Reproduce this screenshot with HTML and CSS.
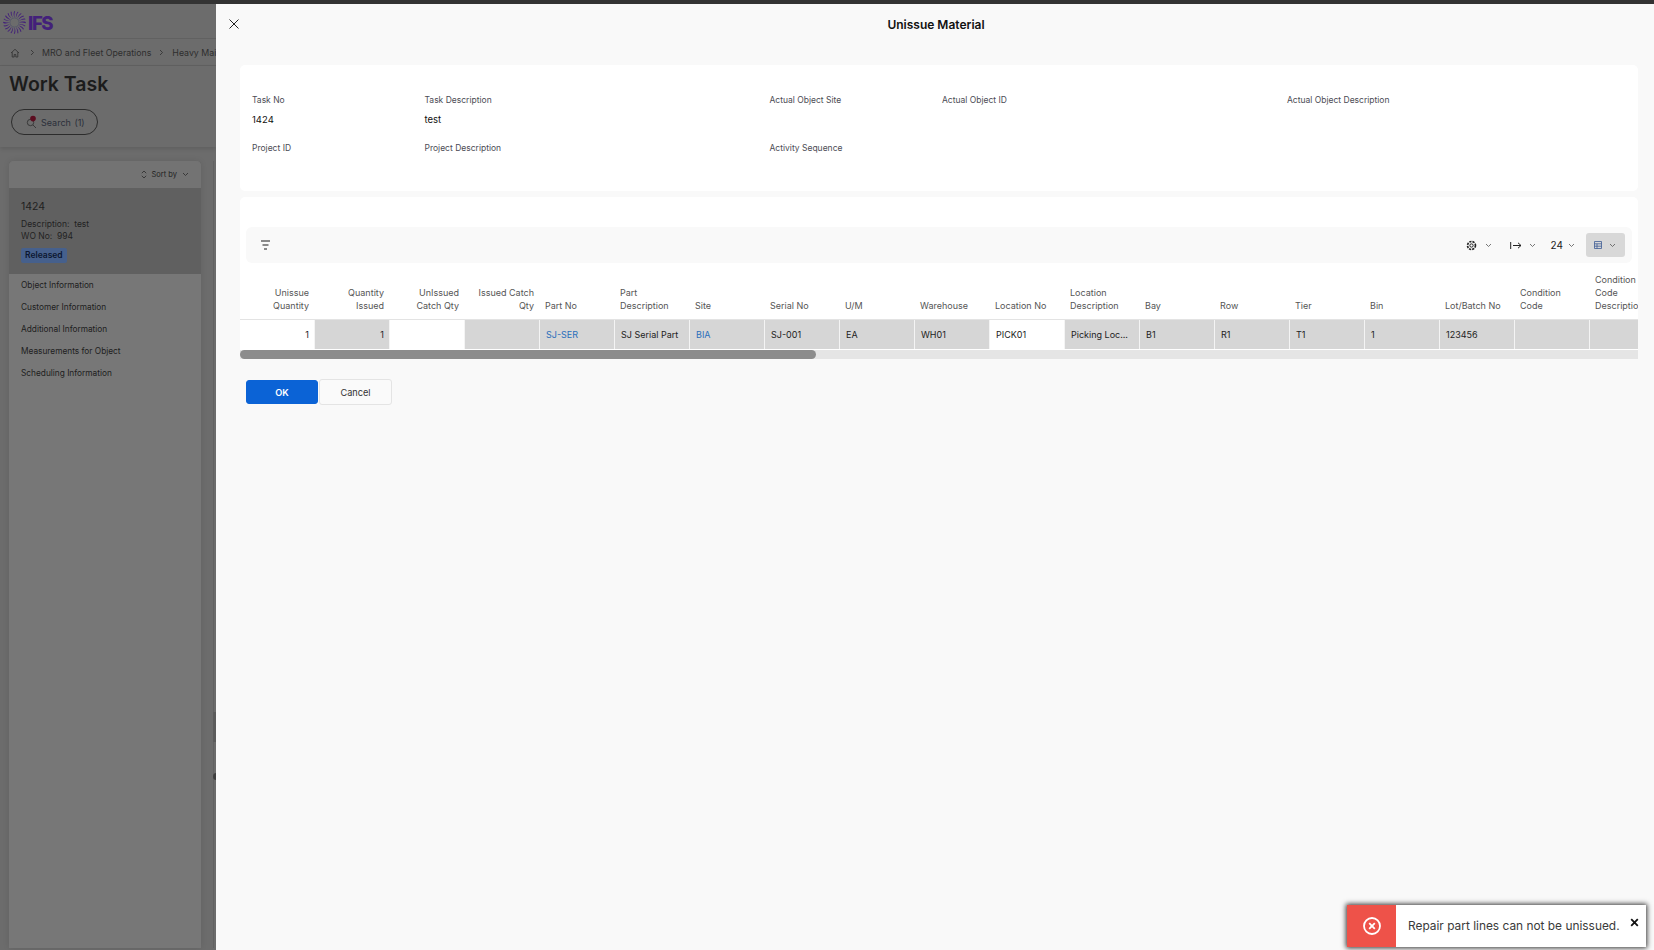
FILE: index.html
```html
<!DOCTYPE html>
<html lang="en">
<head>
<meta charset="utf-8">
<title>Unissue Material</title>
<link rel="stylesheet" href="styles.css">
</head>
<body>
<div class="topline"></div>
<div class="app">
  <aside class="back">
    <div class="logo-row">
      <svg class="logo" width="23" height="23" viewBox="-12 -12 24 24" aria-hidden="true">
        <defs><path id="ray" d="M4.800 0C6.500-.5 9-1.600 11.800-.4L11.700.7C9-.6 6.500.1 4.800 0Z"/></defs>
        <g fill="#43207a">
          <use href="#ray"/><use href="#ray" transform="rotate(18)"/><use href="#ray" transform="rotate(36)"/><use href="#ray" transform="rotate(54)"/><use href="#ray" transform="rotate(72)"/>
          <use href="#ray" transform="rotate(90)"/><use href="#ray" transform="rotate(108)"/><use href="#ray" transform="rotate(126)"/><use href="#ray" transform="rotate(144)"/><use href="#ray" transform="rotate(162)"/>
          <use href="#ray" transform="rotate(180)"/><use href="#ray" transform="rotate(198)"/><use href="#ray" transform="rotate(216)"/><use href="#ray" transform="rotate(234)"/><use href="#ray" transform="rotate(252)"/>
          <use href="#ray" transform="rotate(270)"/><use href="#ray" transform="rotate(288)"/><use href="#ray" transform="rotate(306)"/><use href="#ray" transform="rotate(324)"/><use href="#ray" transform="rotate(342)"/>
        </g>
        <circle r="4.700" fill="none" stroke="#4f5468" stroke-width=".7"/>
      </svg>
      <span class="logo-text">IFS</span>
    </div>
    <nav class="crumbs">
      <svg width="10" height="10" viewBox="0 0 10 10" class="home" aria-hidden="true"><path d="M1 5 5 1.300 9 5M2.200 4.200V9h2V6.500h1.600V9h2V4.200" fill="none" stroke="#2f2f2f" stroke-width=".8"/></svg>
      <svg class="sep" width="5" height="7" viewBox="0 0 5 7" aria-hidden="true"><path d="m1 1 2.500 2.500L1 6" fill="none" stroke="#2f2f2f" stroke-width=".8"/></svg>
      <span>MRO and Fleet Operations</span>
      <svg class="sep" width="5" height="7" viewBox="0 0 5 7" aria-hidden="true"><path d="m1 1 2.500 2.500L1 6" fill="none" stroke="#2f2f2f" stroke-width=".8"/></svg>
      <span class="clip">Heavy Maintenance</span>
    </nav>
    <div class="head">
      <h1>Work Task</h1>
      <div class="search">
        <svg width="12" height="14" viewBox="0 0 12 14" aria-hidden="true"><circle cx="4.500" cy="7.500" r="3.200" fill="none" stroke="#2c2c2c" stroke-width=".8"/><path d="m7 10 3 3" stroke="#2c2c2c" stroke-width=".8"/><circle cx="7" cy="3.600" r="2.800" fill="#5c0d20"/></svg>
        <span>Search (1)</span>
      </div>
    </div>
    <div class="listarea">
      <div class="list">
        <div class="sortbar">
          <svg width="6" height="9" viewBox="0 0 6 9" aria-hidden="true"><path d="M.8 3.200 3 1l2.200 2.200M.8 5.800 3 8l2.200-2.200" fill="none" stroke="#2b2b2b" stroke-width=".8"/></svg>
          <span>Sort by</span>
          <svg class="chev" width="7" height="5" viewBox="0 0 7 5" aria-hidden="true"><path d="m1 1 2.500 2.500L6 1" fill="none" stroke="#2b2b2b" stroke-width=".8"/></svg>
        </div>
        <div class="sel">
          <div class="sel-no">1424</div>
          <div class="sel-line">Description:&nbsp; test</div>
          <div class="sel-line">WO No:&nbsp; 994</div>
          <span class="badge">Released</span>
        </div>
        <ul class="links">
          <li>Object Information</li>
          <li>Customer Information</li>
          <li>Additional Information</li>
          <li>Measurements for Object</li>
          <li>Scheduling Information</li>
        </ul>
      </div>
      <div class="rail"><div class="grip"></div><div class="dot"></div></div>
    </div>
  </aside>

  <main class="drawer">
    <header class="dhead">
      <svg class="close" width="12" height="12" viewBox="0 0 12 12" aria-hidden="true"><path d="m1.500 1.500 9 9m0-9-9 9" stroke="#222" stroke-width="1"/></svg>
      <h2>Unissue Material</h2>
    </header>

    <section class="card fields">
      <div class="f"><label>Task No</label><div class="v">1424</div></div>
      <div class="f s2"><label>Task Description</label><div class="v">test</div></div>
      <div class="f"><label>Actual Object Site</label></div>
      <div class="f s2"><label>Actual Object ID</label></div>
      <div class="f s2"><label>Actual Object Description</label></div>
      <div class="f"><label>Project ID</label></div>
      <div class="f s2"><label>Project Description</label></div>
      <div class="f"><label>Activity Sequence</label></div>
    </section>

    <section class="card tablecard">
      <div class="toolbar">
        <svg width="13" height="12" viewBox="0 0 13 12" aria-hidden="true"><path d="M2 2h9M3.500 6h6M5 10h3" stroke="#1c1c1c" stroke-width="1.200"/></svg>
        <div class="tools">
          <span class="tool gear">
            <svg width="11" height="11" viewBox="0 0 10 10" aria-hidden="true"><circle cx="5" cy="5" r="1.500" fill="none" stroke="#222" stroke-width=".9"/><circle cx="5" cy="5" r="3.600" fill="none" stroke="#222" stroke-width="1.500" stroke-dasharray="2 .9"/></svg>
            <svg class="chev" width="7" height="5" viewBox="0 0 7 5" aria-hidden="true"><path d="m1 1 2.500 2.500L6 1" fill="none" stroke="#555" stroke-width=".8"/></svg>
          </span>
          <span class="tool arrow">
            <svg width="12" height="9" viewBox="0 0 12 9" aria-hidden="true"><path d="M.7 1v7M3 4.500h8M8 1.800l3 2.700-3 2.700" fill="none" stroke="#222" stroke-width="1"/></svg>
            <svg class="chev" width="7" height="5" viewBox="0 0 7 5" aria-hidden="true"><path d="m1 1 2.500 2.500L6 1" fill="none" stroke="#555" stroke-width=".8"/></svg>
          </span>
          <span class="tool num">24
            <svg class="chev" width="7" height="5" viewBox="0 0 7 5" aria-hidden="true"><path d="m1 1 2.500 2.500L6 1" fill="none" stroke="#555" stroke-width=".8"/></svg>
          </span>
          <span class="tool active">
            <svg width="8" height="8" viewBox="0 0 8 8" aria-hidden="true"><path d="M.5.500h7v7h-7zM.5 2.800h7M.5 5.200h7M3 2.800v4.700" fill="none" stroke="#3d5c94" stroke-width=".8"/></svg>
            <svg class="chev" width="7" height="5" viewBox="0 0 7 5" aria-hidden="true"><path d="m1 1 2.500 2.500L6 1" fill="none" stroke="#555" stroke-width=".8"/></svg>
          </span>
        </div>
      </div>

      <div class="tablewrap">
        <div class="grid head-row">
          <div class="th r">Unissue Quantity</div>
          <div class="th r">Quantity Issued</div>
          <div class="th r">UnIssued Catch Qty</div>
          <div class="th r">Issued Catch Qty</div>
          <div class="th">Part No</div>
          <div class="th">Part Description</div>
          <div class="th">Site</div>
          <div class="th">Serial No</div>
          <div class="th">U/M</div>
          <div class="th">Warehouse</div>
          <div class="th">Location No</div>
          <div class="th">Location Description</div>
          <div class="th">Bay</div>
          <div class="th">Row</div>
          <div class="th">Tier</div>
          <div class="th">Bin</div>
          <div class="th">Lot/Batch No</div>
          <div class="th">Condition Code</div>
          <div class="th">Condition Code Description</div>
        </div>
        <div class="grid body-row">
          <div class="td r edit">1</div>
          <div class="td r">1</div>
          <div class="td edit"></div>
          <div class="td"></div>
          <div class="td link">SJ-SER</div>
          <div class="td">SJ Serial Part</div>
          <div class="td link">BIA</div>
          <div class="td">SJ-001</div>
          <div class="td">EA</div>
          <div class="td">WH01</div>
          <div class="td edit">PICK01</div>
          <div class="td">Picking Loc...</div>
          <div class="td">B1</div>
          <div class="td">R1</div>
          <div class="td">T1</div>
          <div class="td">1</div>
          <div class="td">123456</div>
          <div class="td"></div>
          <div class="td"></div>
        </div>
        <div class="scroll"><div class="thumb"></div></div>
      </div>
    </section>

    <div class="actions">
      <button class="btn primary" type="button">OK</button>
      <button class="btn" type="button">Cancel</button>
    </div>
  </main>
</div>

<div class="toast">
  <div class="toast-icon">
    <svg width="20" height="20" viewBox="0 0 20 20" aria-hidden="true"><circle cx="10" cy="10" r="8" fill="none" stroke="#fff" stroke-width="1.800"/><path d="m7.200 7.200 5.600 5.600m0-5.600-5.600 5.600" stroke="#fff" stroke-width="1.800"/></svg>
  </div>
  <div class="toast-msg">Repair part lines can not be unissued.</div>
  <svg class="toast-x" width="9" height="9" viewBox="0 0 9 9" aria-hidden="true"><path d="m1.200 1.200 6.600 6.600m0-6.600-6.600 6.600" stroke="#111" stroke-width="1.800"/></svg>
</div>
</body>
</html>
```

FILE: styles.css
```css
* { box-sizing: border-box; }
html, body { height: 100%; }
body {
  margin: 0;
  overflow: hidden;
  font-family: Inter, "Liberation Sans", sans-serif;
  color: #222;
  background: #6c6c6c;
  display: flex;
  flex-direction: column;
}
.topline { height: 4px; flex: none; background: #333; }
.app { flex: 1; min-height: 0; display: flex; }

/* dimmed page behind the drawer */
.back {
  width: 216px;
  flex: none;
  overflow: hidden;
  display: flex;
  flex-direction: column;
  background: #6c6c6c;
}
.logo-row {
  height: 35px;
  flex: none;
  display: flex;
  align-items: center;
  padding: 3px 0 0 3px;
  border-bottom: 1px solid #616161;
}
.logo-text { font-size: 18.500px; font-weight: 800; color: #43207a; letter-spacing: -1.400px; margin-left: 2px; }
.crumbs {
  height: 27px;
  flex: none;
  display: flex;
  align-items: center;
  white-space: nowrap;
  font-size: 8.800px;
  color: #2e2e2e;
  padding: 1px 0 0 10px;
  border-bottom: 1px solid #616161;
}
.crumbs svg { flex: none; }
.crumbs .sep { margin: 0 8px; }
.crumbs .home + .sep { margin-left: 10px; margin-right: 7px; }
.crumbs .clip { flex: none; }
.head {
  height: 81px;
  flex: none;
  padding: 4px 0 0 9px;
  box-shadow: 0 2px 4px rgba(0,0,0,.12);
}
.head h1 { margin: 0; font-size: 19.500px; line-height: 28px; font-weight: 600; color: #1c1c1c; }
.search {
  margin: 11px 0 0 2px;
  width: 87px;
  height: 26px;
  border: 1px solid #2c2c2c;
  border-radius: 13px;
  display: flex;
  align-items: center;
  gap: 3px;
  padding-left: 14px;
  font-size: 9px;
  color: #2b2f3a;
  word-spacing: 1px;
}
.listarea { flex: 1; min-height: 0; display: flex; padding: 14px 0 2px 9px; }
.list {
  width: 192px;
  flex: none;
  background: #777;
  border-radius: 5px 5px 0 0;
  box-shadow: 0 0 6px rgba(0,0,0,.1);
}
.sortbar {
  height: 27px;
  display: flex;
  align-items: center;
  justify-content: flex-end;
  gap: 5px;
  padding-right: 12px;
  font-size: 7.500px;
  color: #222;
  background: #737373;
  border-radius: 5px 5px 0 0;
}
.sel { height: 86px; background: #606060; padding: 11px 12px 0; }
.sel-no { font-size: 10.500px; line-height: 15px; color: #1f1f1f; margin-bottom: 4px; }
.sel-line { font-size: 8.500px; line-height: 12px; color: #222; }
.badge {
  display: inline-block;
  margin-top: 1px;
  height: 15px;
  line-height: 15px;
  padding: 0 4px;
  border-radius: 2px;
  background: #46608c;
  font-size: 8.500px;
  font-weight: 600;
  color: #0c1730;
}
.links { list-style: none; margin: 0; padding: 0 0 0 12px; }
.links li { height: 22px; line-height: 22px; font-size: 8.300px; color: #202020; }
.rail { flex: 1; border-left: 1px solid #626262; margin-left: 12px; position: relative; }
.grip { position: absolute; right: 0; top: 551px; width: 3px; height: 30px; background: #5c5c5c; }
.dot { position: absolute; right: -4px; top: 612px; width: 7px; height: 7px; border-radius: 50%; background: #3f3f3f; }

/* drawer */
.drawer {
  flex: 1;
  min-width: 0;
  background: #f9f9f9;
  overflow: hidden;
  padding-left: 24px;
  padding-right: 16px;
}
.dhead { height: 61px; display: flex; align-items: flex-start; position: relative; }
.close { position: absolute; left: -12px; top: 14px; }
.dhead h2 {
  margin: 0;
  width: 100%;
  padding: 13px 0 0 0;
  text-align: center;
  font-size: 12px;
  line-height: 16px;
  font-weight: 600;
  color: #111;
  transform: translateX(-3px);
}
.card { background: #fff; border-radius: 5px; }
.fields {
  height: 126px;
  padding: 28.500px 6px 0 12px;
  display: grid;
  grid-template-columns: repeat(8, 1fr);
  grid-auto-rows: 48px;
  align-content: start;
}
.f { min-width: 0; }
.s2 { grid-column: span 2; }
.f label { display: block; font-size: 8.500px; line-height: 13px; color: #4c4c55; }
.f .v { margin-top: 6.500px; font-size: 9.500px; line-height: 14px; color: #111; }
.tablecard { margin-top: 6px; height: 162px; padding-top: 30px; position: relative; }
.toolbar {
  margin: 0 6px;
  height: 36px;
  background: #f9f9f9;
  border-radius: 6px;
  display: flex;
  align-items: center;
  justify-content: space-between;
  padding: 0 7px 0 13px;
}
.tools { display: flex; align-items: center; }
.tool { display: flex; align-items: center; gap: 8px; margin-right: 14px; font-size: 10px; color: #222; }
.tool.gear { gap: 8px; margin-right: 18px; }
.tool.arrow { gap: 7px; margin-right: 15px; }
.tool.num { gap: 5px; margin-right: 11px; }
.tool.active {
  margin-right: 0;
  width: 39px;
  height: 24px;
  padding-left: 8px;
  gap: 7px;
  border-radius: 3px;
  background: #d8d8d8;
}
.tablewrap { margin-top: 7px; overflow: hidden; }
.grid { display: grid; grid-template-columns: repeat(19, 75px); width: 1425px; }
.head-row { height: 50px; border-bottom: 1px solid #e3e3e3; align-items: end; }
.th {
  font-size: 9px;
  line-height: 13px;
  color: #555;
  padding: 0 12px 7px 5px;
}
.th.r { text-align: right; padding: 0 6px 7px 4px; }
.body-row { height: 30px; }
.td {
  height: 29px;
  line-height: 29px;
  font-size: 9px;
  color: #222;
  padding: 0 6px;
  background: #d6d6d6;
  border-right: 1px solid #f4f4f4;
  white-space: nowrap;
  overflow: hidden;
}
.td.r { text-align: right; padding-right: 5px; }
.td.edit { background: #fff; }
.td.link { color: #2a6fbb; }
.scroll { height: 9px; background: #e5e5e5; }
.thumb { width: 576px; height: 9px; background: #8c8c8c; border-radius: 5px; }
.actions { margin: 20px 0 0 6px; display: flex; align-items: center; gap: 1px; }
.btn {
  width: 73px;
  height: 26px;
  padding: 0;
  border: 1px solid #e4e4e4;
  border-radius: 3px;
  background: #fafafa;
  font: 9.200px Inter, "Liberation Sans", sans-serif;
  color: #333;
}
.btn.primary { width: 72px; height: 24px; background: #0b63d6; border-color: #0b63d6; color: #fff; font-weight: 600; }

/* toast */
.toast {
  position: absolute;
  left: 1347px;
  top: 905px;
  width: 299px;
  height: 42px;
  display: flex;
  align-items: center;
  background: #fff;
  box-shadow: 0 0 5px 1px rgba(0,0,0,.8);
}
.toast-icon {
  width: 49px;
  height: 100%;
  flex: none;
  display: flex;
  align-items: center;
  justify-content: center;
  background: #ee5249;
}
.toast-msg { padding: 0 0 2px 12px; font-size: 11.900px; color: #3a3a3a; white-space: nowrap; }
.toast-x { position: absolute; right: 7px; top: 13px; }
```
